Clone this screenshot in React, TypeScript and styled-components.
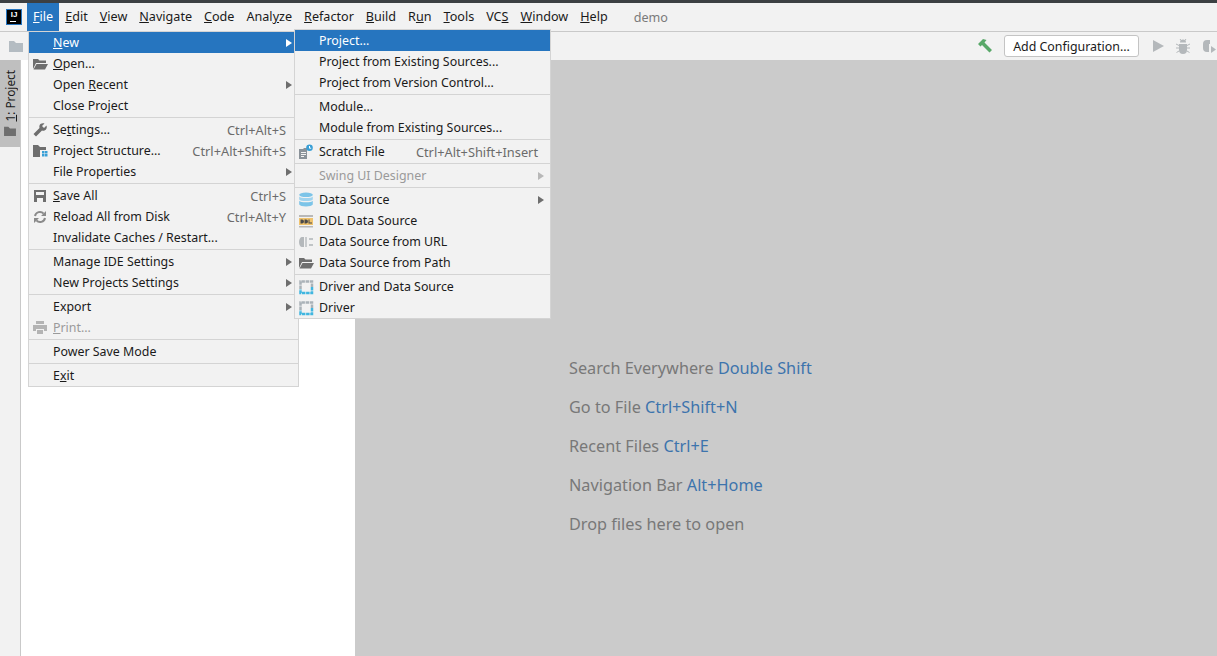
import * as React from 'react';
import styled, { createGlobalStyle } from 'styled-components';

const GlobalStyle = createGlobalStyle`
  html, body { margin: 0; padding: 0; height: 100%; overflow: hidden; }
  body { font-family: "Noto Sans", "Noto Sans CJK SC", sans-serif; font-size: 12.4px; color: #1a1a1a; }
  #root { height: 100%; }
`;

const FolderIcon = ({ color = '#6e6e6e' }: { color?: string }) => (
    <svg width="16" height="16" viewBox="0 0 16 16"><path d="M1 3h5l2 2h7v9H1z" fill={color} /></svg>
);
const OpenFolderIcon = () => (
    <svg width="16" height="16" viewBox="0 0 16 16"><path d="M1 3h5l1.500 1.500H14V7H4L1 13zM4.500 8H16l-3 5.500H1.500z" fill="#6e6e6e" /></svg>
);
const WrenchIcon = () => (
    <svg width="16" height="16" viewBox="0 0 16 16"><path d="M14.500 3.500l-2.500 2.500-2-2 2.500-2.500c-2-.8-4.300 0-5 2-.3 1-.2 1.800 0 2.500L1.500 12l2.500 2.500 6-6c.8.200 1.600.300 2.500 0 2-.7 2.800-3 2-5z" fill="#6e6e6e" /></svg>
);
const StructureIcon = () => (
    <svg width="16" height="16" viewBox="0 0 16 16">
        <path d="M1 2h5l2 2h6v3H8v7H1z" fill="#6e6e6e" />
        <path d="M10 8h2.500v2.500H10zM13 8h2.500v2.500H13zM10 11h2.500v2.500H10zM13 11h2.500v2.500H13z" fill="#389fd6" />
    </svg>
);
const SaveIcon = () => (
    <svg width="16" height="16" viewBox="0 0 16 16"><path fillRule="evenodd" d="M2 2h12v12H2zM4 4v3h8V4zM5 10v4h6v-4z" fill="#6e6e6e" /></svg>
);
const ReloadIcon = () => (
    <svg width="16" height="16" viewBox="0 0 16 16">
        <path d="M3 7a5 5 0 0 1 8.600-2.400" fill="none" stroke="#8a8a8a" strokeWidth="2" />
        <path d="M13 9a5 5 0 0 1-8.600 2.400" fill="none" stroke="#8a8a8a" strokeWidth="2" />
        <path d="M14 2v5H9zM2 14V9h5z" fill="#8a8a8a" />
    </svg>
);
const PrintIcon = () => (
    <svg width="16" height="16" viewBox="0 0 16 16"><path fillRule="evenodd" d="M4 1h8v3H4zM1 5h14v6h-3V9H4v2H1zM5 10h6v4H5z" fill="#b4b4b4" /></svg>
);
const ScratchIcon = () => (
    <svg width="16" height="16" viewBox="0 0 16 16">
        <path fillRule="evenodd" d="M1 5h4l1-1h3v11H1zM3 8v1h5V8zM3 10v1h5v-1zM3 12v1h3v-1z" fill="#8a9299" />
        <circle cx="11.500" cy="3.800" r="3.300" fill="#389fd6" />
        <path d="M11.500 2v2.200h1.700" fill="none" stroke="#fff" strokeWidth="1" />
    </svg>
);
const DatabaseIcon = () => (
    <svg width="16" height="16" viewBox="0 0 16 16">
        <ellipse cx="8" cy="2.800" rx="6.800" ry="2.300" fill="#7cc4e8" />
        <path d="M1.200 4.400c1 2 12.600 2 13.600 0v3c-1 2-12.600 2-13.600 0z" fill="#9fd3ee" />
        <path d="M1.200 8.800c1 2 12.600 2 13.600 0v3.700c-1 2.500-12.600 2.500-13.600 0z" fill="#7cc4e8" />
    </svg>
);
const DdlIcon = () => (
    <svg width="16" height="16" viewBox="0 0 16 16">
        <rect x="1" y="2" width="14" height="2" fill="#b8b8b8" />
        <rect x="1" y="5" width="14" height="7" fill="#f0c36d" />
        <rect x="1" y="13" width="14" height="1.500" fill="#b8b8b8" />
        <path d="M2.500 6.500h1.500a2 2 0 0 1 0 4H2.500zM6.500 6.500H8a2 2 0 0 1 0 4H6.500zM10.500 6.500h1v3h2.500v1h-3.500z" fill="#4a4a4a" />
    </svg>
);
const UrlIcon = () => (
    <svg width="16" height="16" viewBox="0 0 16 16">
        <path d="M6 3H4C2.500 3 1 5 1 8s1.500 5 3 5h2z" fill="#b4b8bb" />
        <path d="M7 3h2v10H7z" fill="#c8cbcd" />
        <path d="M11 4h4v2h-4zM11 10h4v2h-4z" fill="#c0c4c6" />
    </svg>
);
const DriverIcon = () => (
    <svg width="16" height="16" viewBox="0 0 16 16">
        <path d="M2.500 10V2.500H14V8" fill="none" stroke="#aab2b8" strokeWidth="2.500" strokeDasharray="3.500 .7" />
        <path d="M14 8v6H2.500v-4" fill="none" stroke="#40b6e0" strokeWidth="2.500" strokeDasharray="3.500 .7" />
    </svg>
);
const HammerIcon = () => (
    <svg width="16" height="16" viewBox="0 0 16 16"><path d="M1 6l5-5 3.500 1-2 2.500L15 12l-2.500 2.500L5 7 3.500 8.500z" fill="#59a869" /></svg>
);
const RunIcon = () => (
    <svg width="16" height="16" viewBox="0 0 16 16"><path d="M3 2l11 6-11 6z" fill="#b4b8bb" /></svg>
);
const BugIcon = () => (
    <svg width="16" height="16" viewBox="0 0 16 16">
        <path d="M5 4.500a3 3 0 0 1 6 0zM4 6h8v6a4 4 0 0 1-8 0z" fill="#b4b8bb" />
        <path d="M1 6l3 1.500M15 6l-3 1.500M1 10h3M15 10h-3M1.500 14.500L4 13M14.500 14.500L12 13M5 1l1.500 2M11 1L9.500 3" stroke="#b4b8bb" fill="none" />
    </svg>
);
const CoverageIcon = () => (
    <svg width="16" height="16" viewBox="0 0 16 16">
        <path d="M9 2H6a4 4 0 0 0-4 4v4a4 4 0 0 0 4 4h2V6h1z" fill="#b4b8bb" />
        <path d="M10 8l5 3.500L10 15z" fill="#b4b8bb" />
    </svg>
);

const Page = styled.div`
  width: 1217px;
  height: 656px;
  position: relative;
  overflow: hidden;
  display: flex;
  flex-direction: column;
  background: #f2f2f2;
`;
const TitleBar = styled.div`
  height: 3px;
  flex: none;
  background: #3c4043;
`;
const MenuBar = styled.div`
  height: 28px;
  flex: none;
  display: flex;
  align-items: center;
  padding-left: 7px;
  font-size: 12.6px;
`;
const Logo = styled.div`
  width: 14px;
  height: 14px;
  margin-right: 6px;
  background: #000;
  outline: 1px solid #2675bf;
  color: #fff;
  font-family: "Liberation Sans", sans-serif;
  font-size: 8px;
  font-weight: 700;
  line-height: 10px;
  text-align: center;
  position: relative;
  &::after {
    content: '';
    position: absolute;
    left: 3px;
    bottom: 2px;
    width: 6px;
    height: 1px;
    background: #fff;
  }
`;
const MenuTitle = styled.div<{ $active?: boolean }>`
  height: 28px;
  line-height: 28px;
  padding: 0 6px;
  background: ${p => (p.$active ? '#2675bf' : 'transparent')};
  color: ${p => (p.$active ? '#fff' : '#1a1a1a')};
`;
const ProjectName = styled.div`
  margin-left: 20px;
  color: #7a7a7a;
`;
const ToolBar = styled.div`
  height: 29px;
  flex: none;
  box-sizing: border-box;
  border-top: 1px solid #c9c9c9;
  display: flex;
  align-items: center;
  padding-left: 8px;
`;
const ToolSpacer = styled.div`
  flex: 1;
`;
const ToolSlot = styled.div<{ $gap: number }>`
  display: flex;
  margin-right: ${p => p.$gap}px;
`;
const ConfigButton = styled.div`
  width: 135px;
  height: 22px;
  box-sizing: border-box;
  margin: 0 11px 0 2px;
  border: 1px solid #c4c4c4;
  border-radius: 3px;
  background: #fff;
  line-height: 21px;
  text-align: center;
  white-space: nowrap;
`;
const Body = styled.div`
  flex: 1;
  display: flex;
  min-height: 0;
`;
const SideBar = styled.div`
  width: 20px;
  flex: none;
  border-right: 1px solid #c9c9c9;
`;
const ProjectTab = styled.div`
  height: 87px;
  background: #bfbfbf;
  display: flex;
  flex-direction: column;
  align-items: center;
  gap: 1px;
  padding-top: 10px;
  box-sizing: border-box;
`;
const TabLabel = styled.div`
  writing-mode: vertical-rl;
  transform: rotate(180deg);
  font-size: 11.8px;
  line-height: 20px;
`;
const TabIcon = styled.div`
  display: flex;
  transform: scale(0.85);
`;
const ProjectPane = styled.div`
  width: 334px;
  flex: none;
  background: #fff;
`;
const Editor = styled.div`
  flex: 1;
  background: #cbcbcb;
  display: flex;
  flex-direction: column;
  padding: 295px 0 0 214px;
  gap: 13px;
  font-size: 16.25px;
  line-height: 26px;
  color: #787878;
`;
const Shortcut = styled.span`
  color: #3d74ad;
`;
const Popup = styled.div<{ $left: number; $top: number; $width: number }>`
  position: absolute;
  left: ${p => p.$left}px;
  top: ${p => p.$top}px;
  width: ${p => p.$width}px;
  box-sizing: border-box;
  border: 1px solid #d4d4d4;
  background: #f2f2f2;
`;
const Row = styled.div<{ $active?: boolean; $disabled?: boolean }>`
  height: 21px;
  display: flex;
  align-items: center;
  white-space: nowrap;
  background: ${p => (p.$active ? '#2675bf' : 'transparent')};
  color: ${p => (p.$active ? '#fff' : p.$disabled ? '#9a9a9a' : '#1a1a1a')};
`;
const IconCell = styled.span`
  width: 24px;
  flex: none;
  display: flex;
  align-items: center;
  justify-content: center;
  box-sizing: border-box;
  padding-right: 3px;
`;
const Label = styled.span`
  flex: 1;
`;
const Keys = styled.span`
  color: #6b6b6b;
  font-size: 12.8px;
  margin-right: 12px;
`;
const Arrow = styled.span<{ $color: string }>`
  width: 0;
  height: 0;
  margin-right: 6px;
  border-left: 6px solid ${p => p.$color};
  border-top: 4px solid transparent;
  border-bottom: 4px solid transparent;
`;
const Separator = styled.div`
  height: 3px;
  box-sizing: border-box;
  padding: 1px 0;
  &::before {
    content: '';
    display: block;
    height: 1px;
    background: #d4d4d4;
  }
`;

type Item = {
    label: React.ReactNode;
    icon?: React.ReactNode;
    keys?: string;
    sub?: boolean;
    active?: boolean;
    disabled?: boolean;
} | 'sep';

const fileItems: Item[] = [
    { label: <><u>N</u>ew</>, sub: true, active: true },
    { label: <><u>O</u>pen...</>, icon: <OpenFolderIcon /> },
    { label: <>Open <u>R</u>ecent</>, sub: true },
    { label: 'Close Project' },
    'sep',
    { label: <>Se<u>t</u>tings...</>, icon: <WrenchIcon />, keys: 'Ctrl+Alt+S' },
    { label: 'Project Structure...', icon: <StructureIcon />, keys: 'Ctrl+Alt+Shift+S' },
    { label: 'File Properties', sub: true },
    'sep',
    { label: <><u>S</u>ave All</>, icon: <SaveIcon />, keys: 'Ctrl+S' },
    { label: 'Reload All from Disk', icon: <ReloadIcon />, keys: 'Ctrl+Alt+Y' },
    { label: 'Invalidate Caches / Restart...' },
    'sep',
    { label: 'Manage IDE Settings', sub: true },
    { label: 'New Projects Settings', sub: true },
    'sep',
    { label: 'Export', sub: true },
    { label: <><u>P</u>rint...</>, icon: <PrintIcon />, disabled: true },
    'sep',
    { label: 'Power Save Mode' },
    'sep',
    { label: <>E<u>x</u>it</> },
];

const newItems: Item[] = [
    { label: 'Project...', active: true },
    { label: 'Project from Existing Sources...' },
    { label: 'Project from Version Control...' },
    'sep',
    { label: 'Module...' },
    { label: 'Module from Existing Sources...' },
    'sep',
    { label: 'Scratch File', icon: <ScratchIcon />, keys: 'Ctrl+Alt+Shift+Insert' },
    'sep',
    { label: 'Swing UI Designer', sub: true, disabled: true },
    'sep',
    { label: 'Data Source', icon: <DatabaseIcon />, sub: true },
    { label: 'DDL Data Source', icon: <DdlIcon /> },
    { label: 'Data Source from URL', icon: <UrlIcon /> },
    { label: 'Data Source from Path', icon: <OpenFolderIcon /> },
    'sep',
    { label: 'Driver and Data Source', icon: <DriverIcon /> },
    { label: 'Driver', icon: <DriverIcon /> },
];

const arrowColor = (item: Exclude<Item, 'sep'>) => {
    if (item.active) return '#fff';
    return item.disabled ? '#b8b8b8' : '#6e6e6e';
};

const MenuRows = ({ items }: { items: Item[] }) => (
    <>
        {items.map((item, i) =>
            item === 'sep' ? (
                <Separator key={i} />
            ) : (
                <Row key={i} $active={item.active} $disabled={item.disabled}>
                    <IconCell>{item.icon}</IconCell>
                    <Label>{item.label}</Label>
                    {item.keys && <Keys>{item.keys}</Keys>}
                    {item.sub && <Arrow $color={arrowColor(item)} />}
                </Row>
            )
        )}
    </>
);

// before the mnemonic, the mnemonic, after it
const menus: [string, string, string][] = [
    ['', 'E', 'dit'],
    ['', 'V', 'iew'],
    ['', 'N', 'avigate'],
    ['', 'C', 'ode'],
    ['Anal', 'y', 'ze'],
    ['', 'R', 'efactor'],
    ['', 'B', 'uild'],
    ['R', 'u', 'n'],
    ['', 'T', 'ools'],
    ['VC', 'S', ''],
    ['', 'W', 'indow'],
    ['', 'H', 'elp'],
];

const App = () => (
    <Page>
        <GlobalStyle />
        <TitleBar />
        <MenuBar>
            <Logo>IJ</Logo>
            <MenuTitle $active><u>F</u>ile</MenuTitle>
            {menus.map(([before, key, after]) => (
                <MenuTitle key={before + key + after}>{before}<u>{key}</u>{after}</MenuTitle>
            ))}
            <ProjectName>demo</ProjectName>
        </MenuBar>
        <ToolBar>
            <FolderIcon color="#b4bcc2" />
            <ToolSpacer />
            <ToolSlot $gap={9}><HammerIcon /></ToolSlot>
            <ConfigButton>Add Configuration...</ConfigButton>
            <ToolSlot $gap={9}><RunIcon /></ToolSlot>
            <ToolSlot $gap={10}><BugIcon /></ToolSlot>
            <ToolSlot $gap={0}><CoverageIcon /></ToolSlot>
        </ToolBar>
        <Body>
            <SideBar>
                <ProjectTab>
                    <TabLabel><u>1</u>: Project</TabLabel>
                    <TabIcon><FolderIcon /></TabIcon>
                </ProjectTab>
            </SideBar>
            <ProjectPane />
            <Editor>
                <div>Search Everywhere <Shortcut>Double Shift</Shortcut></div>
                <div>Go to File <Shortcut>Ctrl+Shift+N</Shortcut></div>
                <div>Recent Files <Shortcut>Ctrl+E</Shortcut></div>
                <div>Navigation Bar <Shortcut>Alt+Home</Shortcut></div>
                <div>Drop files here to open</div>
            </Editor>
        </Body>
        <Popup $left={28} $top={31} $width={271}>
            <MenuRows items={fileItems} />
        </Popup>
        <Popup $left={294} $top={29} $width={257}>
            <MenuRows items={newItems} />
        </Popup>
    </Page>
);

export default App;
